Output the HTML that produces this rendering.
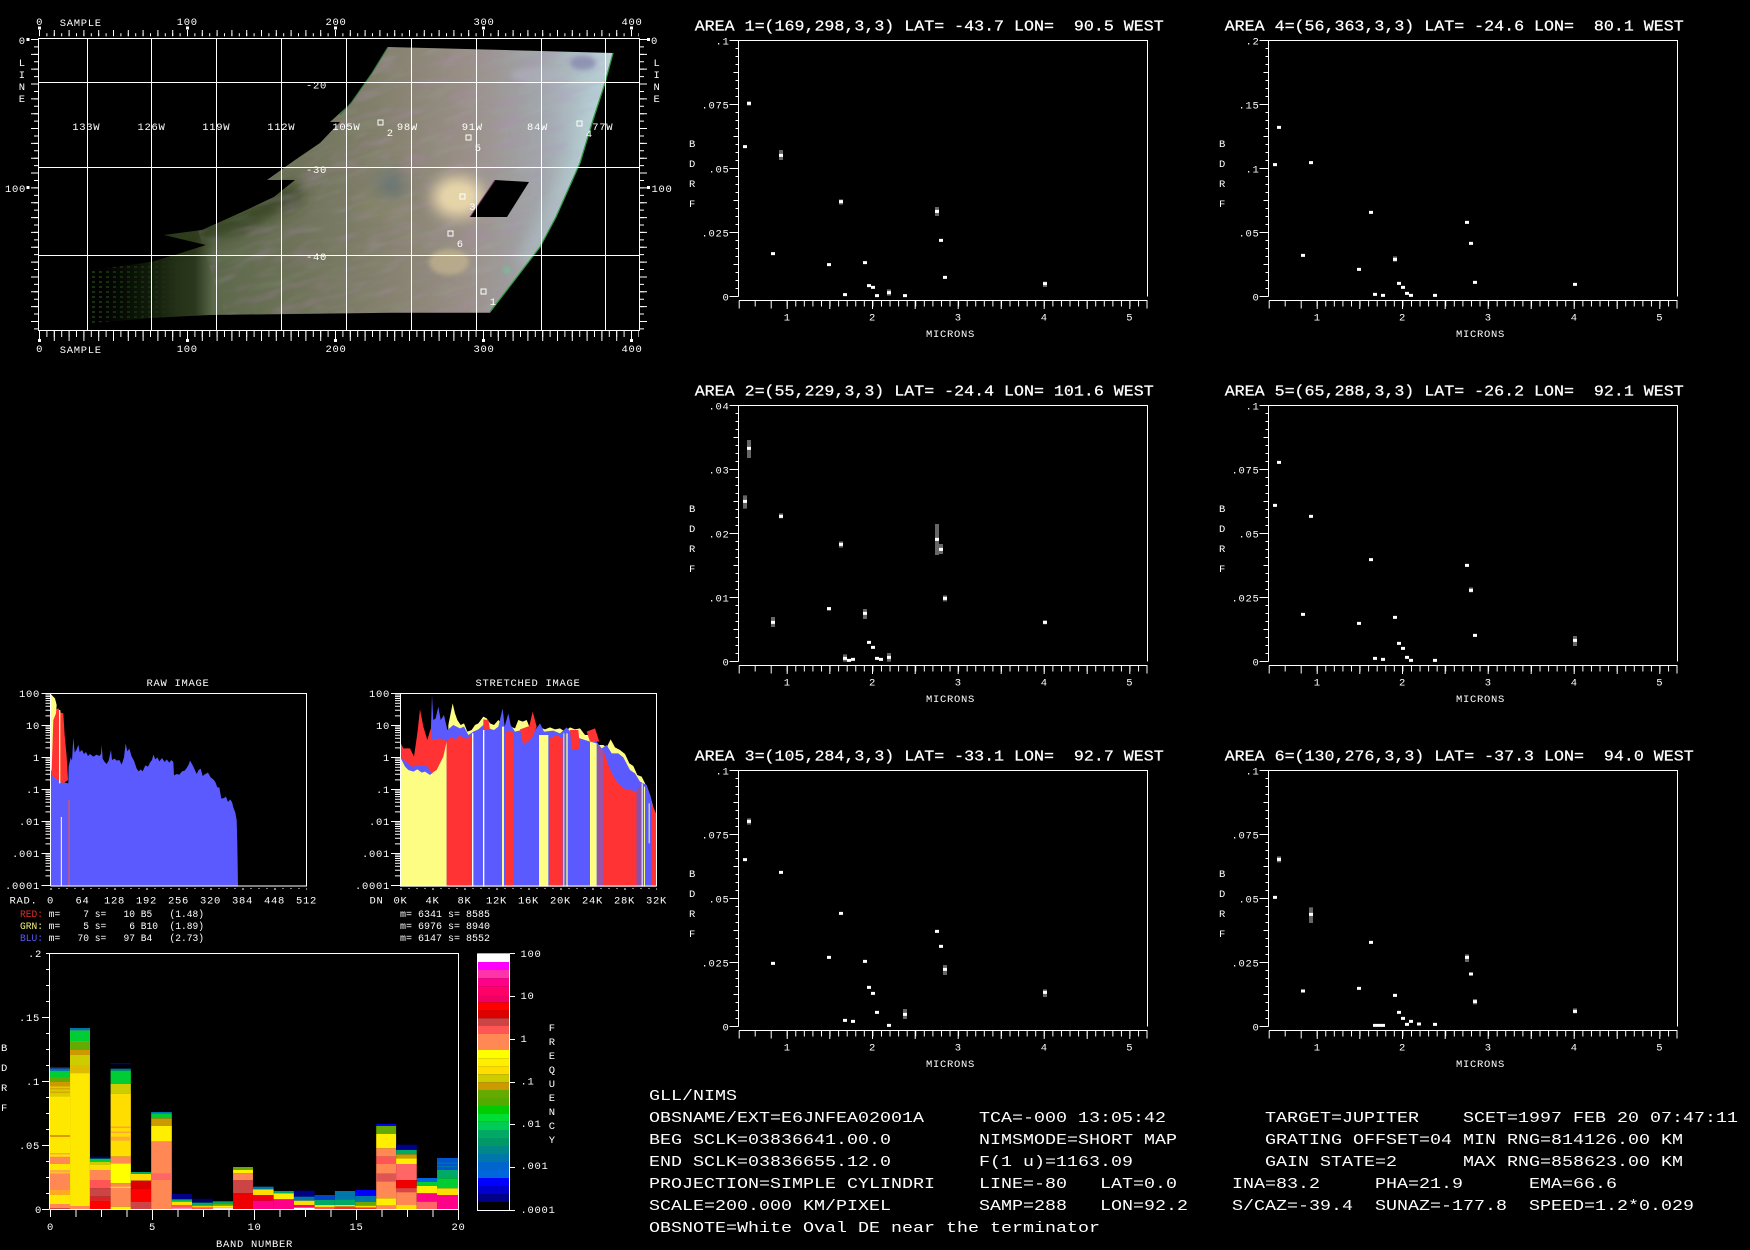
<!DOCTYPE html>
<html lang="en"><head><meta charset="utf-8"><title>GLL/NIMS</title>
<style>
html,body{margin:0;padding:0;background:#000;width:1750px;height:1250px;overflow:hidden}
svg{display:block}
text{font-family:"Liberation Mono",monospace;fill:#fff;white-space:pre}
.s{font-size:10.5px;letter-spacing:.7px}
.c{text-anchor:middle}
.e{text-anchor:end}
.t{font-size:15px;stroke:#fff;stroke-width:.25px}
.b{font-size:15px}
.l{font-size:10px}
.w{fill:none;stroke:#fff;stroke-width:1}
</style></head><body>
<svg xmlns="http://www.w3.org/2000/svg" width="1750" height="1250" viewBox="0 0 1750 1250">
<defs>
<linearGradient id="mg" gradientUnits="userSpaceOnUse" x1="90" y1="0" x2="615" y2="0">
<stop offset="0" stop-color="#050a04"/><stop offset=".11" stop-color="#18260f"/><stop offset=".2" stop-color="#2c381d"/><stop offset=".235" stop-color="#5c684a"/><stop offset=".4" stop-color="#70745a"/><stop offset=".58" stop-color="#878370"/><stop offset=".72" stop-color="#9a9088"/><stop offset=".86" stop-color="#a2a6ac"/><stop offset=".96" stop-color="#b4ccd2"/><stop offset="1" stop-color="#c0d2d8"/>
</linearGradient>
<clipPath id="mc"><polygon id="mp" points="388,47 505,50 613,53 605,83 593,120 580,163 556,217 540,247 490,312.7 391,312.7 210,315 150,318 92,323 92,270 151,262 181,253 206,245 164,235 202,230 240,213 274,197 295,180 267,180 295,160 320,143 340,122 330,122 351,103 372,73"/></clipPath>
<filter id="bl" x="-50%" y="-50%" width="200%" height="200%"><feGaussianBlur stdDeviation="7"/></filter>
<filter id="bs" x="-50%" y="-50%" width="200%" height="200%"><feGaussianBlur stdDeviation="2.5"/></filter>
<filter id="n1" x="0" y="0" width="1" height="1"><feTurbulence type="fractalNoise" baseFrequency=".03 .1" numOctaves="2" seed="3"/><feColorMatrix values="0 0 0 0 .48  0 0 0 0 .25  0 0 0 0 .55  1.8 0 0 0 -.85"/></filter>
<filter id="n2" x="0" y="0" width="1" height="1"><feTurbulence type="fractalNoise" baseFrequency=".03 .1" numOctaves="2" seed="11"/><feColorMatrix values="0 0 0 0 .5  0 0 0 0 .7  0 0 0 0 .65  1.8 0 0 0 -.85"/></filter>
<pattern id="dots" width="7" height="5" patternUnits="userSpaceOnUse"><rect width="7" height="5" fill="#000"/><rect x="1" y="1" width="3" height="2" fill="#1c3a12"/></pattern>
<linearGradient id="fadeL" gradientUnits="userSpaceOnUse" x1="90" y1="0" x2="175" y2="0"><stop offset="0" stop-color="#fff" stop-opacity=".9"/><stop offset="1" stop-color="#fff" stop-opacity="0"/></linearGradient>
<mask id="fm"><rect x="80" y="250" width="100" height="80" fill="url(#fadeL)"/></mask>
<g id="pf" fill="none" stroke="#fff">
<path d="M0 256V0H409V256"/>
<path d="M-1.5 0V256" stroke-width="3" stroke-dasharray="1 7" stroke-dashoffset=".5"/>
<path d="M-9 0H0M-9 64H0M-9 128H0M-9 192H0M-9 256H0M-5 32H0M-5 96H0M-5 160H0M-5 224H0"/>
<path d="M.5 260H409"/>
<path d="M48.2 263H409" stroke-width="6" stroke-dasharray="1 7.57"/>
<path d="M.7 260V268M16.7 260V266M32.7 260V268M48.7 260V268.5M91.3 260V268.5M134 260V268.5M176.7 260V268.5M219.7 260V268.5M262.7 260V268.5M305.7 260V268.5M348.7 260V268.5M391.3 260V268.5M408.5 260V268"/>
</g>
<path id="dec" fill="none" stroke="#fff" d="M-9 0H0M-5 32H0M-5 22.4H0M-5 16.7H0M-5 12.7H0M-5 9.7H0M-5 7.1H0M-5 5H0M-5 3.1H0M-5 1.5H0"/>
</defs>
<rect width="1750" height="1250" fill="#000"/>

<!-- MAP -->
<g clip-path="url(#mc)">
<rect x="80" y="40" width="540" height="285" fill="url(#mg)"/>
<rect x="80" y="250" width="100" height="80" fill="url(#dots)" mask="url(#fm)"/>
<path d="M164 240L240 222L300 190" stroke="#33401f" stroke-width="20" fill="none" opacity=".85" filter="url(#bl)"/>
<g transform="rotate(-18 350 180)" opacity=".32"><rect x="190" y="0" width="480" height="380" filter="url(#n1)"/></g>
<g transform="rotate(-18 350 180)" opacity=".12"><rect x="190" y="0" width="480" height="380" filter="url(#n2)"/></g>
<path d="M603 95L575 170L525 265" stroke="#bcd8dc" stroke-width="20" fill="none" opacity=".35" filter="url(#bl)"/>
<path d="M575 78H610" stroke="#e0bcbc" stroke-width="5" opacity=".8" filter="url(#bs)"/>
<ellipse cx="583" cy="63" rx="13" ry="7" fill="#8a8cb0" opacity=".85" filter="url(#bs)"/>
<ellipse cx="540" cy="75" rx="30" ry="8" fill="#b0b4c0" opacity=".5" filter="url(#bs)"/>
<ellipse cx="391" cy="186" rx="13" ry="16" fill="#5f7074" opacity=".7" filter="url(#bl)"/>
<ellipse cx="384" cy="205" rx="26" ry="11" fill="#8e8e68" opacity=".4" filter="url(#bl)"/>
<ellipse cx="458" cy="197" rx="26" ry="21" fill="#e8d6aa" opacity=".95" filter="url(#bl)"/>
<ellipse cx="458" cy="197" rx="16" ry="12" fill="#e8d6aa" opacity=".6" filter="url(#bs)"/>
<ellipse cx="449" cy="262" rx="20" ry="13" fill="#c2b48e" opacity=".75" filter="url(#bs)"/>
<ellipse cx="507" cy="270" rx="4" ry="3" fill="#70c8a0" filter="url(#bs)" opacity=".8"/>
<polygon points="495,180 529,182 507,217 470,217" fill="#000"/>
</g>
<path d="M613 53L605 83L593 120L580 163L556 217L540 247L490 312" fill="none" stroke="#2f9a42" stroke-width="1.3"/>
<path d="M388 47L372 73L351 103L340 115" fill="none" stroke="#2f7a3a" stroke-width="1"/>
<path d="M495 180L470 217" fill="none" stroke="#7a3a6a" stroke-width="1"/>
<g class="w">
<rect x="38.5" y="38.5" width="601" height="292"/>
<path d="M87.5 38V331M151.5 38V331M216.5 38V331M281.5 38V331M346.5 38V331M411.5 38V331M476.5 38V331M541.5 38V331M605.5 38V331M38 82.5H640M38 167.5H640M38 255.5H640"/>
<path d="M39 34.7H639" stroke-width="3" stroke-dasharray="1 6.4"/>
<path d="M39 33H639" stroke-width="6" stroke-dasharray="1 13.8"/>
<path d="M39 334H639" stroke-width="6" stroke-dasharray="1 6.4"/>
<path d="M39 336H639" stroke-width="10" stroke-dasharray="1 13.8"/>
<path d="M36 39V331" stroke-width="4" stroke-dasharray="1 6.42"/>
<path d="M34.5 39V331" stroke-width="7" stroke-dasharray="1 13.84"/>
<path d="M642 39V331" stroke-width="4" stroke-dasharray="1 6.42"/>
<path d="M643.5 39V331" stroke-width="7" stroke-dasharray="1 13.84"/>
</g>
<path fill="#fff" d="M38 26.5h3v3h-3zM186 26.5h3v3h-3zM334 26.5h3v3h-3zM482 26.5h3v3h-3zM630 26.5h3v3h-3zM38 339h3v3h-3zM186 339h3v3h-3zM334 339h3v3h-3zM482 339h3v3h-3zM630 339h3v3h-3zM26.5 38h3v3h-3zM26.5 186h3v3h-3zM647 38h3v3h-3zM647 186h3v3h-3z"/>
<text class="s c" x="39.6" y="25">0</text><text class="s" x="59.8" y="26">SAMPLE</text><text class="s c" x="187.3" y="25">100</text><text class="s c" x="336" y="25">200</text><text class="s c" x="484" y="25">300</text><text class="s c" x="632" y="25">400</text>
<text class="s c" x="39.6" y="352">0</text><text class="s" x="59.8" y="353">SAMPLE</text><text class="s c" x="187.3" y="352">100</text><text class="s c" x="336" y="352">200</text><text class="s c" x="484" y="352">300</text><text class="s c" x="632" y="352">400</text>
<text class="s c" x="22.3" y="44">0</text><text class="s c" x="22.3" y="66">L</text><text class="s c" x="22.3" y="78">I</text><text class="s c" x="22.3" y="90">N</text><text class="s c" x="22.3" y="102">E</text><text class="s e" x="26" y="192">100</text>
<text class="s c" x="654.5" y="44">0</text><text class="s c" x="657" y="66">L</text><text class="s c" x="657" y="78">I</text><text class="s c" x="657" y="90">N</text><text class="s c" x="657" y="102">E</text><text class="s" x="651.5" y="192">100</text>
<text class="s c" x="86.3" y="130">133W</text><text class="s c" x="151.5" y="130">126W</text><text class="s c" x="216.3" y="130">119W</text><text class="s c" x="281.2" y="130">112W</text><text class="s c" x="346.4" y="130">105W</text><text class="s c" x="407.4" y="130">98W</text><text class="s c" x="472.2" y="130">91W</text><text class="s c" x="537.5" y="130">84W</text><text class="s c" x="602.7" y="130">77W</text>
<text class="s c" x="316.5" y="88.5">-20</text><text class="s c" x="316.5" y="173">-30</text><text class="s c" x="316.5" y="260">-40</text>
<g class="w"><rect x="378" y="120" width="5" height="5"/><rect x="466" y="135" width="5" height="5"/><rect x="460" y="194" width="5" height="5"/><rect x="448" y="231" width="5" height="5"/><rect x="481" y="289" width="5" height="5"/><rect x="577" y="121" width="5" height="5"/></g>
<text class="s c" x="390.3" y="136">2</text><text class="s c" x="478.3" y="151">5</text><text class="s c" x="472.7" y="210">3</text><text class="s c" x="460.3" y="247">6</text><text class="s c" x="493.3" y="305">1</text><text class="s c" x="589.3" y="137">4</text>

<!-- SPECTRA -->
<use href="#pf" x="738.5" y="40.5"/><use href="#pf" x="738.5" y="405.5"/><use href="#pf" x="738.5" y="770.5"/><use href="#pf" x="1268.5" y="40.5"/><use href="#pf" x="1268.5" y="405.5"/><use href="#pf" x="1268.5" y="770.5"/>

<g transform="translate(738.5,40.5)"><text class="t" x="-43.8" y="-10" textLength="469" lengthAdjust="spacingAndGlyphs">AREA 1=(169,298,3,3) LAT= -43.7 LON=  90.5 WEST</text>
<text class="s e" x="-9" y="4">.1</text><text class="s e" x="-9" y="68">.075</text><text class="s e" x="-9" y="132">.05</text><text class="s e" x="-9" y="196">.025</text><text class="s e" x="-9" y="260">0</text>
<text class="s c" x="-46" y="106.5">B</text><text class="s c" x="-46" y="126.5">D</text><text class="s c" x="-46" y="146.5">R</text><text class="s c" x="-46" y="166.5">F</text>
<text class="s c" x="48.7" y="280">1</text><text class="s c" x="134" y="280">2</text><text class="s c" x="219.7" y="280">3</text><text class="s c" x="305.7" y="280">4</text><text class="s c" x="391.3" y="280">5</text><text class="s c" x="212" y="296.5">MICRONS</text></g>
<g transform="translate(738.5,405.5)"><text class="t" x="-43.8" y="-10" textLength="459" lengthAdjust="spacingAndGlyphs">AREA 2=(55,229,3,3) LAT= -24.4 LON= 101.6 WEST</text>
<text class="s e" x="-9" y="4">.04</text><text class="s e" x="-9" y="68">.03</text><text class="s e" x="-9" y="132">.02</text><text class="s e" x="-9" y="196">.01</text><text class="s e" x="-9" y="260">0</text>
<text class="s c" x="-46" y="106.5">B</text><text class="s c" x="-46" y="126.5">D</text><text class="s c" x="-46" y="146.5">R</text><text class="s c" x="-46" y="166.5">F</text>
<text class="s c" x="48.7" y="280">1</text><text class="s c" x="134" y="280">2</text><text class="s c" x="219.7" y="280">3</text><text class="s c" x="305.7" y="280">4</text><text class="s c" x="391.3" y="280">5</text><text class="s c" x="212" y="296.5">MICRONS</text></g>
<g transform="translate(738.5,770.5)"><text class="t" x="-43.8" y="-10" textLength="469" lengthAdjust="spacingAndGlyphs">AREA 3=(105,284,3,3) LAT= -33.1 LON=  92.7 WEST</text>
<text class="s e" x="-9" y="4">.1</text><text class="s e" x="-9" y="68">.075</text><text class="s e" x="-9" y="132">.05</text><text class="s e" x="-9" y="196">.025</text><text class="s e" x="-9" y="260">0</text>
<text class="s c" x="-46" y="106.5">B</text><text class="s c" x="-46" y="126.5">D</text><text class="s c" x="-46" y="146.5">R</text><text class="s c" x="-46" y="166.5">F</text>
<text class="s c" x="48.7" y="280">1</text><text class="s c" x="134" y="280">2</text><text class="s c" x="219.7" y="280">3</text><text class="s c" x="305.7" y="280">4</text><text class="s c" x="391.3" y="280">5</text><text class="s c" x="212" y="296.5">MICRONS</text></g>
<g transform="translate(1268.5,40.5)"><text class="t" x="-43.8" y="-10" textLength="459" lengthAdjust="spacingAndGlyphs">AREA 4=(56,363,3,3) LAT= -24.6 LON=  80.1 WEST</text>
<text class="s e" x="-9" y="4">.2</text><text class="s e" x="-9" y="68">.15</text><text class="s e" x="-9" y="132">.1</text><text class="s e" x="-9" y="196">.05</text><text class="s e" x="-9" y="260">0</text>
<text class="s c" x="-46" y="106.5">B</text><text class="s c" x="-46" y="126.5">D</text><text class="s c" x="-46" y="146.5">R</text><text class="s c" x="-46" y="166.5">F</text>
<text class="s c" x="48.7" y="280">1</text><text class="s c" x="134" y="280">2</text><text class="s c" x="219.7" y="280">3</text><text class="s c" x="305.7" y="280">4</text><text class="s c" x="391.3" y="280">5</text><text class="s c" x="212" y="296.5">MICRONS</text></g>
<g transform="translate(1268.5,405.5)"><text class="t" x="-43.8" y="-10" textLength="459" lengthAdjust="spacingAndGlyphs">AREA 5=(65,288,3,3) LAT= -26.2 LON=  92.1 WEST</text>
<text class="s e" x="-9" y="4">.1</text><text class="s e" x="-9" y="68">.075</text><text class="s e" x="-9" y="132">.05</text><text class="s e" x="-9" y="196">.025</text><text class="s e" x="-9" y="260">0</text>
<text class="s c" x="-46" y="106.5">B</text><text class="s c" x="-46" y="126.5">D</text><text class="s c" x="-46" y="146.5">R</text><text class="s c" x="-46" y="166.5">F</text>
<text class="s c" x="48.7" y="280">1</text><text class="s c" x="134" y="280">2</text><text class="s c" x="219.7" y="280">3</text><text class="s c" x="305.7" y="280">4</text><text class="s c" x="391.3" y="280">5</text><text class="s c" x="212" y="296.5">MICRONS</text></g>
<g transform="translate(1268.5,770.5)"><text class="t" x="-43.8" y="-10" textLength="469" lengthAdjust="spacingAndGlyphs">AREA 6=(130,276,3,3) LAT= -37.3 LON=  94.0 WEST</text>
<text class="s e" x="-9" y="4">.1</text><text class="s e" x="-9" y="68">.075</text><text class="s e" x="-9" y="132">.05</text><text class="s e" x="-9" y="196">.025</text><text class="s e" x="-9" y="260">0</text>
<text class="s c" x="-46" y="106.5">B</text><text class="s c" x="-46" y="126.5">D</text><text class="s c" x="-46" y="146.5">R</text><text class="s c" x="-46" y="166.5">F</text>
<text class="s c" x="48.7" y="280">1</text><text class="s c" x="134" y="280">2</text><text class="s c" x="219.7" y="280">3</text><text class="s c" x="305.7" y="280">4</text><text class="s c" x="391.3" y="280">5</text><text class="s c" x="212" y="296.5">MICRONS</text></g>

<!-- data points -->
<g transform="translate(680,0) scale(.33333)" fill="none">
<path stroke="#666" stroke-width="12" d="M207 304V317M303 450V480M483 598V614M627 868V887M771 621V648M1095 845V861"/>
<path stroke="#fff" stroke-width="9" d="M189 440h12M201 310h12M273 761h12M297 466h12M441 794h12M477 605h12M489 884h12M549 788h12M561 857h12M573 862h12M585 887h12M621 878h12M669 887h12M765 634h12M777 721h12M789 832h12M1089 851h12"/></g>
<g transform="translate(680,370) scale(.33333)" fill="none">
<path stroke="#666" stroke-width="12" d="M195 376V416M207 210V264M279 741V771M303 430V445M483 514V533M495 853V875M555 717V747M627 849V875M771 462V555M783 522V552M795 676V694M1095 751V763M447 711V722"/>
<path stroke="#fff" stroke-width="9" d="M189 394h12M201 235h12M273 757h12M297 439h12M441 716h12M477 523h12M489 865h12M501 871h12M513 868h12M549 730h12M561 817h12M573 832h12M585 865h12M597 868h12M621 862h12M765 508h12M777 538h12M789 685h12M1089 757h12"/></g>
<g transform="translate(680,735) scale(.33333)" fill="none">
<path stroke="#666" stroke-width="12" d="M207 250V269M675 822V852M795 690V720M1095 763V786"/>
<path stroke="#fff" stroke-width="9" d="M189 374h12M201 259h12M273 685h12M297 412h12M441 667h12M477 535h12M489 856h12M513 859h12M549 679h12M561 757h12M573 775h12M585 832h12M621 871h12M669 838h12M765 589h12M777 634h12M789 703h12M1089 772h12"/></g>
<g transform="translate(1210,0) scale(.33333)" fill="none">
<path stroke="#666" stroke-width="12" d="M555 769V785"/>
<path stroke="#fff" stroke-width="9" d="M189 494h12M201 382h12M273 766h12M297 488h12M441 808h12M477 637h12M489 883h12M513 886h12M549 778h12M561 850h12M573 862h12M585 880h12M597 886h12M669 886h12M765 667h12M777 730h12M789 847h12M1089 853h12"/></g>
<g transform="translate(1210,370) scale(.33333)" fill="none">
<path stroke="#666" stroke-width="12" d="M783 652V667M1095 798V828"/>
<path stroke="#fff" stroke-width="9" d="M189 406h12M201 277h12M273 733h12M297 439h12M441 760h12M477 569h12M489 865h12M513 868h12M549 742h12M561 820h12M573 835h12M585 862h12M597 871h12M669 871h12M765 586h12M777 661h12M789 796h12M1089 811h12"/></g>
<g transform="translate(1210,735) scale(.33333)" fill="none">
<path stroke="#666" stroke-width="12" d="M207 364V382M303 517V564M771 658V681M795 792V808M1095 820V835"/>
<path stroke="#fff" stroke-width="9" d="M189 487h12M201 373h12M273 768h12M297 538h12M441 760h12M477 622h12M489 871h12M501 871h12M513 871h12M549 781h12M561 832h12M573 850h12M585 868h12M597 859h12M621 867h12M669 868h12M765 667h12M777 717h12M789 800h12M1089 829h12"/></g>

<!-- RAW HIST -->
<g transform="translate(0,670) scale(.33333)">
<polygon fill="#5a5aff" points="152,650 152,310 160,312 170,322 180,330 195,338 205,340 206,290 212,262 216,272 220,203 224,248 230,238 235,224 239,246 246,240 252,252 258,246 264,258 270,252 280,260 290,254 298,258 303,252 305,225 308,266 314,276 320,282 326,272 333,240 336,270 344,266 350,272 358,270 365,284 372,262 377,220 382,244 388,236 395,260 402,272 410,296 416,304 422,298 428,304 436,286 444,290 450,278 456,270 460,254 466,268 472,262 478,274 486,264 494,276 500,268 508,278 514,270 520,276 522,316 530,312 538,314 546,304 554,302 560,294 566,284 570,272 576,282 582,294 590,312 596,300 602,296 608,318 616,312 624,308 632,322 640,328 646,336 652,352 658,352 664,386 672,384 678,380 684,396 690,388 696,396 700,412 706,428 710,450 712,522 714,650"/>
<polygon fill="#ff3333" points="152,310 152,130 162,120 175,115 182,128 190,130 194,196 200,260 204,330 190,340 165,325"/>
<polygon fill="#fdfd84" points="152,72 165,85 170,105 168,130 160,150 155,300 152,305"/>
<path stroke="#fdfd84" stroke-width="4" d="M179 120V340"/><path stroke="#fff" stroke-width="3" d="M184 441V648"/><path stroke="#b85a8a" stroke-width="5" d="M207 390V648"/>
</g>
<path class="w" d="M50.5 886V693.5H306.5V886H50.5"/>
<use href="#dec" x="50.5" y="693.5"/><use href="#dec" x="50.5" y="725.5"/><use href="#dec" x="50.5" y="757.5"/><use href="#dec" x="50.5" y="789.5"/><use href="#dec" x="50.5" y="821.5"/><use href="#dec" x="50.5" y="853.5"/><path class="w" d="M41.5 885.5H50"/>
<path class="w" d="M50.5 888.5H307" stroke-width="3" stroke-dasharray="1 7"/><path class="w" d="M50.5 889.5H307" stroke-width="6" stroke-dasharray="1 31"/>
<text class="s c" x="178" y="686">RAW IMAGE</text>
<text class="s e" x="40" y="697">100</text><text class="s e" x="40" y="729">10</text><text class="s e" x="40" y="761">1</text><text class="s e" x="40" y="793">.1</text><text class="s e" x="40" y="825">.01</text><text class="s e" x="40" y="857">.001</text><text class="s e" x="40" y="889">.0001</text>
<text class="s" x="9.5" y="903.5">RAD.</text><text class="s c" x="50.5" y="903.5">0</text><text class="s c" x="82.5" y="903.5">64</text><text class="s c" x="114.5" y="903.5">128</text><text class="s c" x="146.5" y="903.5">192</text><text class="s c" x="178.5" y="903.5">256</text><text class="s c" x="210.5" y="903.5">320</text><text class="s c" x="242.5" y="903.5">384</text><text class="s c" x="274.5" y="903.5">448</text><text class="s c" x="306.5" y="903.5">512</text>
<text class="l" x="20" y="917" textLength="184" lengthAdjust="spacingAndGlyphs"><tspan fill="#e03030">RED:</tspan> m=    7 s=   10 B5   (1.48)</text>
<text class="l" x="20" y="929" textLength="184" lengthAdjust="spacingAndGlyphs"><tspan fill="#f5f580">GRN:</tspan> m=    5 s=    6 B10  (1.89)</text>
<text class="l" x="20" y="941" textLength="184" lengthAdjust="spacingAndGlyphs"><tspan fill="#5a5aff">BLU:</tspan> m=   70 s=   97 B4   (2.73)</text>

<!-- STRETCHED HIST -->
<g transform="translate(340,670) scale(.33333)">
<polygon fill="#fdfd84" points="325,165 332,130 338,100 345,130 352,150 362,165 372,160 382,185 395,180 405,165 415,160 430,140 440,145 450,160 462,165 475,150 485,160 500,185 512,170 525,175 535,150 548,155 560,150 572,180 590,190 600,172 615,178 630,172 645,178 660,175 675,185 690,172 705,178 720,175 735,195 750,195 762,212 775,225 790,225 800,232 812,208 825,232 840,240 855,252 868,280 880,288 892,315 905,320 920,350 930,375 945,430 948,640 948,650 325,650"/>
<polygon fill="#5a5aff" points="180,225 190,262 200,255 215,268 225,265 240,260 252,235 262,250 272,200 276,75 280,150 287,145 295,110 302,150 312,135 322,180 340,165 360,175 372,170 385,195 400,185 415,178 430,165 445,175 462,180 475,170 488,115 494,170 505,130 512,165 525,185 545,180 560,190 575,195 600,160 612,185 640,182 660,190 680,172 700,195 720,205 735,210 750,215 770,215 785,235 800,225 815,250 835,250 850,262 870,300 885,310 900,335 920,345 932,380 945,440 948,650 180,650"/>
<polygon fill="#ff3333" points="180,215 190,235 210,235 222,260 232,190 240,118 250,170 262,210 272,175 276,210 300,205 320,212 320,300 290,315 275,310 262,290 250,285 215,290 180,260"/>
<polygon fill="#fdfd84" points="180,650 180,260 195,290 205,300 220,305 232,298 245,308 255,305 270,315 282,305 290,300 310,260 320,215 320,650"/>
<polygon fill="#ff3333" points="320,215 335,200 345,210 360,195 372,205 385,205 395,195 395,650 320,650"/>
<polygon fill="#ff3333" points="430,148 445,150 450,178 430,178"/><polygon fill="#ff3333" points="540,178 568,168 578,125 590,170 575,205 550,225"/>
<rect x="396" y="190" width="4" height="460" fill="#fff"/><rect x="429" y="180" width="4" height="470" fill="#fff"/>
<polygon fill="#fdfd84" points="486,170 492,170 492,650 486,650"/>
<polygon fill="#ff3333" points="495,190 508,180 522,190 522,650 495,650"/>
<polygon fill="#fdfd84" points="597,195 625,195 625,650 597,650"/>
<polygon fill="#ff3333" points="630,205 650,195 668,205 668,650 630,650"/><rect x="670" y="190" width="3" height="460" fill="#fdfd84"/><rect x="679" y="190" width="4" height="460" fill="#fdfd84"/>
<polygon fill="#ff3333" points="690,180 715,180 720,235 695,240"/><polygon fill="#ff3333" points="740,185 765,175 778,215 750,215"/>
<polygon fill="#fdfd84" points="750,215 770,220 770,650 750,650"/>
<polygon fill="#9a55a8" points="771,225 790,240 790,650 771,650"/>
<polygon fill="#ff3333" points="790,240 805,285 820,320 835,340 850,355 870,360 890,365 890,650 790,650"/>
<polygon fill="#8a50a8" points="890,360 905,340 905,650 890,650"/>
<rect x="905" y="340" width="3" height="310" fill="#fff"/><rect x="912" y="350" width="3" height="300" fill="#fdfd84"/>
<rect x="926" y="400" width="3" height="120" fill="#fdfd84"/>
<polygon fill="#ff3333" points="935,400 948,430 948,650 935,650"/>
</g>
<path class="w" d="M400.5 886V693.5H656.5V886H400.5"/>
<use href="#dec" x="400" y="693.5"/><use href="#dec" x="400" y="725.5"/><use href="#dec" x="400" y="757.5"/><use href="#dec" x="400" y="789.5"/><use href="#dec" x="400" y="821.5"/><use href="#dec" x="400" y="853.5"/><path class="w" d="M391 885.5H400"/>
<path class="w" d="M400.5 888.5H657" stroke-width="3" stroke-dasharray="1 7"/><path class="w" d="M400.5 889.5H657" stroke-width="6" stroke-dasharray="1 31"/>
<text class="s c" x="528" y="686">STRETCHED IMAGE</text>
<text class="s e" x="390" y="697">100</text><text class="s e" x="390" y="729">10</text><text class="s e" x="390" y="761">1</text><text class="s e" x="390" y="793">.1</text><text class="s e" x="390" y="825">.01</text><text class="s e" x="390" y="857">.001</text><text class="s e" x="390" y="889">.0001</text>
<text class="s" x="369.5" y="903.5">DN</text><text class="s c" x="400.5" y="903.5">0K</text><text class="s c" x="432.5" y="903.5">4K</text><text class="s c" x="464.5" y="903.5">8K</text><text class="s c" x="496.5" y="903.5">12K</text><text class="s c" x="528.5" y="903.5">16K</text><text class="s c" x="560.5" y="903.5">20K</text><text class="s c" x="592.5" y="903.5">24K</text><text class="s c" x="624.5" y="903.5">28K</text><text class="s c" x="656.5" y="903.5">32K</text>
<text class="l" x="400" y="917">m= 6341 s= 8585</text><text class="l" x="400" y="929">m= 6976 s= 8940</text><text class="l" x="400" y="941">m= 6147 s= 8552</text>

<!-- HEATMAP -->
<g transform="translate(0,940) scale(.38270,.33333)">
<g id="h0"><rect x="130" y="382" width="53" height="426" fill="#ffe800"/><rect x="130" y="382" width="53" height="4" fill="#008"/><rect x="130" y="386" width="53" height="7" fill="#07a"/><rect x="130" y="393" width="53" height="18" fill="#0c3"/><rect x="130" y="411" width="53" height="15" fill="#6a0"/><rect x="130" y="426" width="53" height="14" fill="#c90"/><rect x="130" y="440" width="53" height="30" fill="#dc0"/><rect x="130" y="445" width="53" height="3" fill="#c90"/><rect x="130" y="455" width="53" height="3" fill="#c90"/><rect x="130" y="585" width="53" height="6" fill="#d90"/><rect x="130" y="640" width="53" height="3" fill="#f85"/><rect x="130" y="650" width="53" height="22" fill="#f85"/><rect x="130" y="690" width="53" height="8" fill="#fa4"/><rect x="130" y="700" width="53" height="50" fill="#f85"/><rect x="130" y="750" width="53" height="15" fill="#fa2"/><rect x="130" y="792" width="53" height="12" fill="#f85"/><rect x="130" y="804" width="53" height="4" fill="#c44"/></g>
<rect x="183" y="264" width="52" height="544" fill="#ffe800"/><rect x="183" y="264" width="52" height="8" fill="#07a"/><rect x="183" y="272" width="52" height="33" fill="#0c3"/><rect x="183" y="305" width="52" height="25" fill="#6a0"/><rect x="183" y="330" width="52" height="15" fill="#c90"/><rect x="183" y="345" width="52" height="30" fill="#cc0"/><rect x="183" y="375" width="52" height="25" fill="#db0"/><rect x="183" y="798" width="52" height="10" fill="#f85"/>
<rect x="235" y="650" width="54" height="6" fill="#008"/><rect x="235" y="656" width="54" height="9" fill="#0c3"/><rect x="235" y="665" width="54" height="10" fill="#cc0"/><rect x="235" y="675" width="54" height="15" fill="#fd0"/><rect x="235" y="690" width="54" height="30" fill="#f85"/><rect x="235" y="720" width="54" height="25" fill="#f55"/><rect x="235" y="745" width="54" height="25" fill="#c44"/><rect x="235" y="770" width="54" height="15" fill="#d22"/><rect x="235" y="785" width="54" height="23" fill="#f00"/>
<rect x="289" y="369" width="53" height="4" fill="#008"/><rect x="289" y="386" width="53" height="6" fill="#07a"/><rect x="289" y="392" width="53" height="40" fill="#0c3"/><rect x="289" y="432" width="53" height="28" fill="#cc0"/><rect x="289" y="460" width="53" height="190" fill="#fd0"/><rect x="289" y="560" width="53" height="3" fill="#f85"/><rect x="289" y="575" width="53" height="3" fill="#f85"/><rect x="289" y="590" width="53" height="12" fill="#fa3"/><rect x="289" y="650" width="53" height="20" fill="#f85"/><rect x="289" y="670" width="53" height="60" fill="#ff0"/><rect x="289" y="730" width="53" height="70" fill="#f85"/><rect x="289" y="740" width="53" height="4" fill="#fd0"/><rect x="289" y="800" width="53" height="8" fill="#fe0"/>
<rect x="342" y="696" width="53" height="6" fill="#0a6"/><rect x="342" y="702" width="53" height="20" fill="#fd0"/><rect x="342" y="722" width="53" height="23" fill="#d00"/><rect x="342" y="745" width="53" height="40" fill="#f00"/><rect x="342" y="785" width="53" height="23" fill="#c44"/>
<rect x="395" y="516" width="54" height="4" fill="#07a"/><rect x="395" y="520" width="54" height="15" fill="#0c3"/><rect x="395" y="535" width="54" height="23" fill="#c90"/><rect x="395" y="558" width="54" height="47" fill="#fe0"/><rect x="395" y="605" width="54" height="203" fill="#f85"/><rect x="395" y="700" width="54" height="20" fill="#f66"/>
<rect x="449" y="762" width="53" height="16" fill="#008"/><rect x="449" y="778" width="53" height="7" fill="#0b5"/><rect x="449" y="785" width="53" height="10" fill="#fd0"/><rect x="449" y="795" width="53" height="7" fill="#f55"/><rect x="449" y="802" width="53" height="6" fill="#f8a"/>
<rect x="502" y="776" width="54" height="12" fill="#006"/><rect x="502" y="788" width="54" height="9" fill="#0a6"/><rect x="502" y="797" width="54" height="6" fill="#fc0"/><rect x="502" y="803" width="54" height="5" fill="#f55"/>
<rect x="556" y="784" width="53" height="6" fill="#0a6"/><rect x="556" y="790" width="53" height="7" fill="#6a0"/><rect x="556" y="797" width="53" height="6" fill="#fe0"/><rect x="556" y="803" width="53" height="5" fill="#fdd"/>
<rect x="609" y="681" width="52" height="9" fill="#6a0"/><rect x="609" y="690" width="52" height="10" fill="#fe0"/><rect x="609" y="700" width="52" height="20" fill="#f85"/><rect x="609" y="720" width="52" height="40" fill="#c44"/><rect x="609" y="760" width="52" height="48" fill="#e00"/>
<rect x="661" y="740" width="54" height="8" fill="#07a"/><rect x="661" y="748" width="54" height="17" fill="#fd0"/><rect x="661" y="765" width="54" height="17" fill="#e01"/><rect x="661" y="782" width="54" height="26" fill="#f08"/>
<rect x="715" y="753" width="53" height="7" fill="#0a6"/><rect x="715" y="760" width="53" height="18" fill="#fe0"/><rect x="715" y="778" width="53" height="30" fill="#f08"/>
<rect x="768" y="752" width="54" height="18" fill="#008"/><rect x="768" y="770" width="54" height="12" fill="#07a"/><rect x="768" y="782" width="54" height="13" fill="#fd0"/><rect x="768" y="795" width="54" height="8" fill="#f06"/><rect x="768" y="803" width="54" height="5" fill="#fff"/>
<rect x="822" y="765" width="53" height="15" fill="#04c"/><rect x="822" y="780" width="53" height="15" fill="#0a6"/><rect x="822" y="795" width="53" height="7" fill="#fd0"/><rect x="822" y="802" width="53" height="6" fill="#f55"/>
<rect x="875" y="753" width="53" height="25" fill="#07a"/><rect x="875" y="778" width="53" height="17" fill="#0a6"/><rect x="875" y="795" width="53" height="5" fill="#fd0"/><rect x="875" y="800" width="53" height="8" fill="#e33"/>
<rect x="928" y="750" width="55" height="18" fill="#00f"/><rect x="928" y="768" width="55" height="17" fill="#07a"/><rect x="928" y="785" width="55" height="12" fill="#6a0"/><rect x="928" y="797" width="55" height="6" fill="#fd0"/><rect x="928" y="803" width="55" height="5" fill="#e33"/>
<rect x="983" y="552" width="52" height="6" fill="#00f"/><rect x="983" y="558" width="52" height="24" fill="#6a0"/><rect x="983" y="582" width="52" height="43" fill="#fe0"/><rect x="983" y="625" width="52" height="25" fill="#f85"/><rect x="983" y="650" width="52" height="22" fill="#f55"/><rect x="983" y="672" width="52" height="103" fill="#f85"/><rect x="983" y="700" width="52" height="25" fill="#d55"/><rect x="983" y="775" width="52" height="22" fill="#fe0"/><rect x="983" y="797" width="52" height="11" fill="#f85"/>
<rect x="1035" y="614" width="54" height="16" fill="#008"/><rect x="1035" y="630" width="54" height="13" fill="#0a6"/><rect x="1035" y="643" width="54" height="12" fill="#c90"/><rect x="1035" y="655" width="54" height="17" fill="#fe0"/><rect x="1035" y="672" width="54" height="48" fill="#f66"/><rect x="1035" y="720" width="54" height="25" fill="#e00"/><rect x="1035" y="745" width="54" height="50" fill="#f85"/><rect x="1035" y="745" width="54" height="12" fill="#d44"/><rect x="1035" y="795" width="54" height="13" fill="#fd0"/>
<rect x="1089" y="714" width="53" height="12" fill="#06d"/><rect x="1089" y="726" width="53" height="12" fill="#0c3"/><rect x="1089" y="738" width="53" height="22" fill="#fe0"/><rect x="1089" y="760" width="53" height="25" fill="#f08"/><rect x="1089" y="785" width="53" height="23" fill="#f66"/>
<rect x="1142" y="654" width="55" height="36" fill="#05c"/><rect x="1142" y="668" width="55" height="3" fill="#07a"/><rect x="1142" y="678" width="55" height="3" fill="#07a"/><rect x="1142" y="690" width="55" height="25" fill="#0a6"/><rect x="1142" y="715" width="55" height="30" fill="#0c3"/><rect x="1142" y="745" width="55" height="20" fill="#fd0"/><rect x="1142" y="765" width="55" height="43" fill="#f08"/>

<!-- colour bar -->
<rect x="1248" y="40" width="82" height="26" fill="#fff"/><rect x="1248" y="66" width="82" height="24" fill="#f0f"/><rect x="1248" y="90" width="82" height="25" fill="#f3a"/><rect x="1248" y="115" width="82" height="25" fill="#f08"/><rect x="1248" y="140" width="82" height="25" fill="#f06"/><rect x="1248" y="165" width="82" height="22" fill="#e06"/><rect x="1248" y="187" width="82" height="23" fill="#f00"/><rect x="1248" y="210" width="82" height="25" fill="#d00"/><rect x="1248" y="235" width="82" height="23" fill="#c44"/><rect x="1248" y="258" width="82" height="24" fill="#f55"/><rect x="1248" y="282" width="82" height="48" fill="#f85"/><rect x="1248" y="330" width="82" height="25" fill="#ff0"/><rect x="1248" y="355" width="82" height="25" fill="#fe0"/><rect x="1248" y="380" width="82" height="23" fill="#fd0"/><rect x="1248" y="403" width="82" height="24" fill="#cc0"/><rect x="1248" y="427" width="82" height="23" fill="#c90"/><rect x="1248" y="450" width="82" height="24" fill="#6a0"/><rect x="1248" y="474" width="82" height="24" fill="#5a0"/><rect x="1248" y="498" width="82" height="24" fill="#0c0"/><rect x="1248" y="522" width="82" height="23" fill="#0d3"/><rect x="1248" y="545" width="82" height="25" fill="#0c5"/><rect x="1248" y="570" width="82" height="24" fill="#0a6"/><rect x="1248" y="594" width="82" height="24" fill="#096"/><rect x="1248" y="618" width="82" height="24" fill="#088"/><rect x="1248" y="642" width="82" height="24" fill="#07a"/><rect x="1248" y="666" width="82" height="24" fill="#06c"/><rect x="1248" y="690" width="82" height="24" fill="#06d"/><rect x="1248" y="714" width="82" height="24" fill="#00f"/><rect x="1248" y="738" width="82" height="24" fill="#00c"/><rect x="1248" y="762" width="82" height="24" fill="#008"/>
</g>
<path class="w" d="M49.5 1209.5V953.5H458.5V1209.5H49.5"/>
<path class="w" d="M46 953.5H49M46 969.5H49M46 985.5H49M46 1001.5H49M46 1033.5H49M46 1049.5H49M46 1065.5H49M46 1097.5H49M46 1113.5H49M46 1129.5H49M46 1161.5H49M46 1177.5H49M46 1193.5H49M42 1017.5H49M42 1081.5H49M42 1145.5H49M42 1209.5H49"/>
<path class="w" d="M50.5 1210V1217M76 1210V1217M101.5 1210V1217M127 1210V1217M152.5 1210V1220M178 1210V1217M203.5 1210V1217M229 1210V1217M254.5 1210V1220M280 1210V1217M305.5 1210V1217M331 1210V1217M356.5 1210V1220M382 1210V1217M407.5 1210V1217M433 1210V1217M458.5 1210V1220"/>
<path class="w" d="M477.5 953.5V1210.5H509.5V953.5M509.5 953.5H515M509.5 996.5H515M509.5 1039.5H515M509.5 1082.5H515M509.5 1124.5H515M509.5 1167.5H515M509.5 1210.5H515"/>
<text class="s e" x="42" y="957">.2</text><text class="s e" x="40" y="1021">.15</text><text class="s e" x="40" y="1085">.1</text><text class="s e" x="40" y="1149">.05</text><text class="s e" x="42" y="1213">0</text>
<text class="s c" x="4.5" y="1051">B</text><text class="s c" x="4.5" y="1071">D</text><text class="s c" x="4.5" y="1091">R</text><text class="s c" x="4.5" y="1111">F</text>
<text class="s c" x="50.5" y="1230">0</text><text class="s c" x="152.5" y="1230">5</text><text class="s c" x="254.5" y="1230">10</text><text class="s c" x="356.5" y="1230">15</text><text class="s c" x="458.5" y="1230">20</text><text class="s c" x="254.5" y="1247">BAND NUMBER</text>
<text class="s" x="520.5" y="957">100</text><text class="s" x="520.5" y="999">10</text><text class="s" x="520.5" y="1042">1</text><text class="s" x="520.5" y="1084.5">.1</text><text class="s" x="520.5" y="1127">.01</text><text class="s" x="520.5" y="1169">.001</text><text class="s" x="520.5" y="1213">.0001</text>
<text class="s c" x="552.2" y="1031">F</text><text class="s c" x="552.2" y="1045">R</text><text class="s c" x="552.2" y="1059">E</text><text class="s c" x="552.2" y="1073">Q</text><text class="s c" x="552.2" y="1087">U</text><text class="s c" x="552.2" y="1101">E</text><text class="s c" x="552.2" y="1115">N</text><text class="s c" x="552.2" y="1129">C</text><text class="s c" x="552.2" y="1143">Y</text>

<!-- INFO BLOCK -->
<text class="b" x="649" y="1100" textLength="88" lengthAdjust="spacingAndGlyphs">GLL/NIMS</text>
<text class="b" x="649" y="1122" textLength="1089" lengthAdjust="spacingAndGlyphs">OBSNAME/EXT=E6JNFEA02001A     TCA=-000 13:05:42         TARGET=JUPITER    SCET=1997 FEB 20 07:47:11</text>
<text class="b" x="649" y="1144" textLength="1034" lengthAdjust="spacingAndGlyphs">BEG SCLK=03836641.00.0        NIMSMODE=SHORT MAP        GRATING OFFSET=04 MIN RNG=814126.00 KM</text>
<text class="b" x="649" y="1166" textLength="1034" lengthAdjust="spacingAndGlyphs">END SCLK=03836655.12.0        F(1 u)=1163.09            GAIN STATE=2      MAX RNG=858623.00 KM</text>
<text class="b" x="649" y="1188" textLength="968" lengthAdjust="spacingAndGlyphs">PROJECTION=SIMPLE CYLINDRI    LINE=-80   LAT=0.0     INA=83.2     PHA=21.9      EMA=66.6</text>
<text class="b" x="649" y="1210" textLength="1045" lengthAdjust="spacingAndGlyphs">SCALE=200.000 KM/PIXEL        SAMP=288   LON=92.2    S/CAZ=-39.4  SUNAZ=-177.8  SPEED=1.2*0.029</text>
<text class="b" x="649" y="1232" textLength="451" lengthAdjust="spacingAndGlyphs">OBSNOTE=White Oval DE near the terminator</text>
</svg>
</body></html>
